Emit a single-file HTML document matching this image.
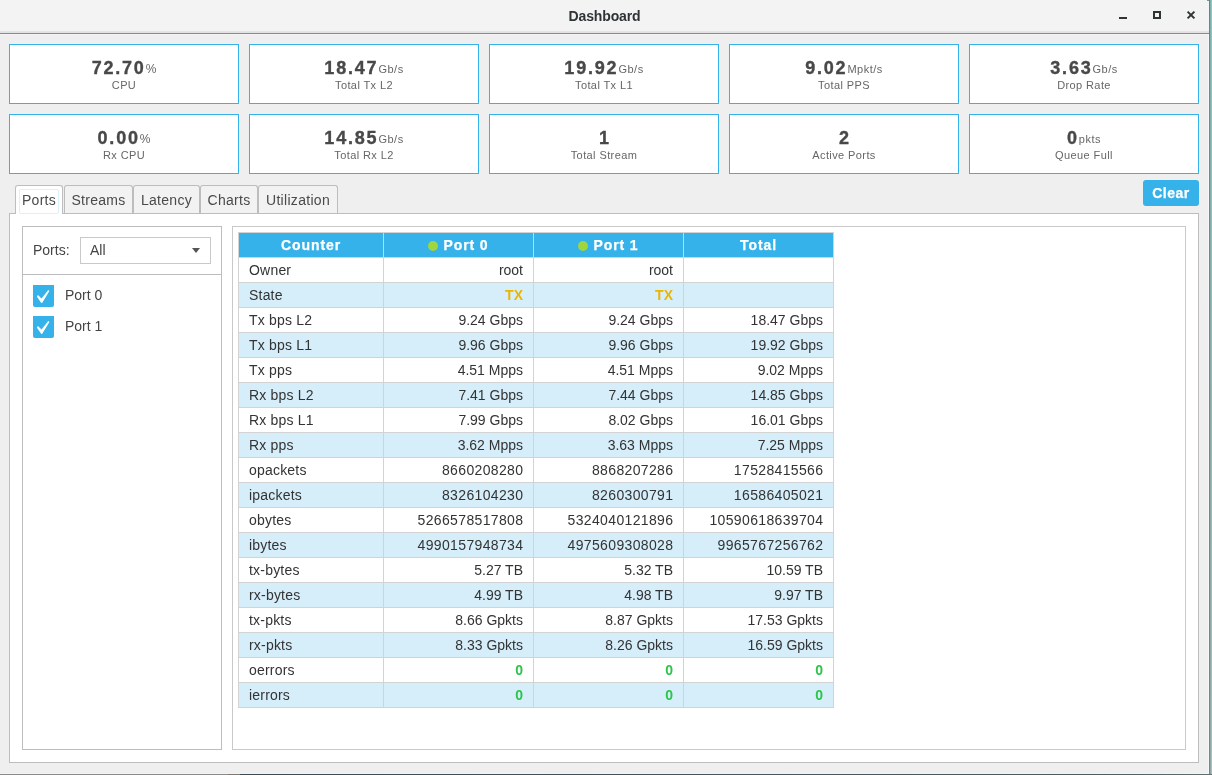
<!DOCTYPE html>
<html><head><meta charset="utf-8"><style>
*{margin:0;padding:0;box-sizing:border-box}
html,body{width:1212px;height:775px;overflow:hidden}
body{background:#efefef;font-family:"Liberation Sans",sans-serif;position:relative}
#win{will-change:transform;position:absolute;left:0;top:0;width:1209px;height:774px;background:#efefef;border-right:1px solid #f7f7f7;border-bottom:1px solid #f3f3f3}
#title{position:absolute;left:0;top:0;width:1209px;height:35px;background:linear-gradient(180deg,#f3f3f3 0,#f3f3f3 31px,#e4e4e4 31px,#e2e2e2 33px,#8b8b85 33px,#8b8b85 34px,#f5f5f5 34px)}
#title .t{position:absolute;left:0;width:1209px;top:8px;text-align:center;font-size:14px;font-weight:bold;color:#2e3436;line-height:16px;letter-spacing:-0.15px}
.wb{position:absolute}
.card{position:absolute;width:230px;height:60px;border:1px solid #35b2e9;background:#fff;text-align:center;color:#444}
.card .val{position:absolute;left:0;right:0;top:13px;line-height:20px;white-space:nowrap}
.card .n{font-size:18px;font-weight:bold;color:#484848;letter-spacing:1.8px;-webkit-text-stroke:0.35px #484848}
.card .u{font-size:11px;color:#666;margin-left:0;letter-spacing:0.5px;position:relative;top:-1px}
.card .u.pc{font-size:12px;letter-spacing:0}
.card .n.nu{margin-right:-1.8px}
.card .lbl{position:absolute;left:0;right:0;top:34px;font-size:11px;line-height:13px;color:#666;letter-spacing:0.4px}
#clear{position:absolute;left:1143px;top:180px;width:56px;height:26px;border-radius:3px;background:#35b2e9;color:#fff;font-weight:bold;font-size:14px;line-height:26px;text-align:center;letter-spacing:0.5px;-webkit-text-stroke:0.25px #fff}
.tab{position:absolute;top:185px;height:29px;border:1px solid #bdbdbd;border-bottom:none;border-radius:3px 3px 0 0;background:#f2f2f2;font-size:14px;color:#4a4a4a;text-align:center;line-height:29px;letter-spacing:0.3px}
.tab.act{background:#fff;height:29px;z-index:3}
.tab.act span{display:block;position:absolute;left:3px;right:3px;top:3px;height:25px;border:1px solid #dcf0fa;border-radius:2px;line-height:20px}
#pane{position:absolute;left:9px;top:213px;width:1190px;height:550px;background:#fff;border:1px solid #bdbdbd;z-index:2}
#lp{position:absolute;left:22px;top:226px;width:200px;height:524px;border:1px solid #bdbdbd;background:#fff;z-index:4}
#rp{position:absolute;left:232px;top:226px;width:954px;height:524px;border:1px solid #c9c9c9;background:#fff;z-index:4}
#lbl{position:absolute;left:33px;top:242px;font-size:14px;color:#444;z-index:5;line-height:16px}
#dd{position:absolute;left:80px;top:237px;width:131px;height:27px;border:1px solid #c9c9c9;background:#fff;z-index:5}
#dd span{position:absolute;left:9px;top:4px;font-size:14px;line-height:16px;color:#444}
#dd i{position:absolute;left:111px;top:10px;width:0;height:0;border-left:4.5px solid transparent;border-right:4.5px solid transparent;border-top:5px solid #555}
#sep{position:absolute;left:23px;top:274px;width:198px;height:1px;background:#bdbdbd;z-index:5}
.cb{position:absolute;left:33px;width:21px;height:22px;background:#35b2e9;border-radius:0 0 2px 2px;z-index:5}
.cbl{position:absolute;left:65px;font-size:14px;line-height:16px;color:#444;z-index:5}
.th,.td{position:absolute;height:26px;border:1px solid #d3d3d3;font-size:14px;line-height:24px;z-index:6;white-space:nowrap}
.th{background:#35b2e9;color:#fff;font-weight:bold;text-align:center;letter-spacing:0.9px;font-size:14px;-webkit-text-stroke:0.25px #fff}
.td{background:#fff;color:#333;text-align:right;padding-right:10px}
.td.alt{background:#d6eefa}
.td.dg{letter-spacing:0.35px;padding-right:9.65px}
.td.l{text-align:left;padding-left:10px;letter-spacing:0.2px}
.dot{display:inline-block;width:10px;height:10px;border-radius:50%;background:#9fd63d;margin-right:5px;vertical-align:-1px}
b.tx{color:#ebb500}
b.ok{color:#2cc44a}
#desk{position:absolute;left:0;top:774px;height:1px;width:1212px;background:linear-gradient(90deg,#8a8a8a 0,#8a8a8a 228px,#7d7872 228px,#7d7872 240px,#3c4a55 240px,#4d5c60 1100px,#5f7070 1212px)}
</style></head><body>
<div id="win">
<div id="title"><div class="t">Dashboard</div>
<svg class="wb" style="left:1116px;top:12px" width="14" height="14"><rect x="3" y="5" width="8" height="2" fill="#2e3436"/></svg>
<svg class="wb" style="left:1152px;top:10px" width="14" height="14"><rect x="2" y="2" width="6" height="6" fill="none" stroke="#2e3436" stroke-width="2"/></svg>
<svg class="wb" style="left:1185px;top:9px" width="14" height="14"><path d="M2.6 2.6L9.4 9.4M9.4 2.6L2.6 9.4" stroke="#2e3436" stroke-width="2"/></svg>
</div>
<div class="card" style="left:9px;top:44px"><div class="val"><span class="n">72.70</span><span class="u pc">%</span></div><div class="lbl">CPU</div></div>
<div class="card" style="left:249px;top:44px"><div class="val"><span class="n">18.47</span><span class="u">Gb/s</span></div><div class="lbl">Total Tx L2</div></div>
<div class="card" style="left:489px;top:44px"><div class="val"><span class="n">19.92</span><span class="u">Gb/s</span></div><div class="lbl">Total Tx L1</div></div>
<div class="card" style="left:729px;top:44px"><div class="val"><span class="n">9.02</span><span class="u">Mpkt/s</span></div><div class="lbl">Total PPS</div></div>
<div class="card" style="left:969px;top:44px"><div class="val"><span class="n">3.63</span><span class="u">Gb/s</span></div><div class="lbl">Drop Rate</div></div>
<div class="card" style="left:9px;top:114px"><div class="val"><span class="n">0.00</span><span class="u pc">%</span></div><div class="lbl">Rx CPU</div></div>
<div class="card" style="left:249px;top:114px"><div class="val"><span class="n">14.85</span><span class="u">Gb/s</span></div><div class="lbl">Total Rx L2</div></div>
<div class="card" style="left:489px;top:114px"><div class="val"><span class="n nu">1</span></div><div class="lbl">Total Stream</div></div>
<div class="card" style="left:729px;top:114px"><div class="val"><span class="n nu">2</span></div><div class="lbl">Active Ports</div></div>
<div class="card" style="left:969px;top:114px"><div class="val"><span class="n">0</span><span class="u">pkts</span></div><div class="lbl">Queue Full</div></div>
<div id="clear">Clear</div>
<div class="tab act" style="left:15px;width:48px"><span>Ports</span></div>
<div class="tab" style="left:64px;width:69px"><span>Streams</span></div>
<div class="tab" style="left:133px;width:67px"><span>Latency</span></div>
<div class="tab" style="left:200px;width:58px"><span>Charts</span></div>
<div class="tab" style="left:258px;width:80px"><span>Utilization</span></div>
<div id="pane"></div>
<div id="lp"></div>
<div id="rp"></div>
<div id="lbl">Ports:</div>
<div id="dd"><span>All</span><i></i></div>
<div id="sep"></div>
<div class="cb" style="top:285px"><svg width="21" height="22"><path d="M3.8 11.4L5.0 9.9L8.5 13.4L15.3 4.9L16.4 5.9L9.1 18.0L8.3 18.0Z" fill="#fff"/></svg></div>
<div class="cbl" style="top:287px">Port 0</div>
<div class="cb" style="top:316px"><svg width="21" height="22"><path d="M3.8 11.4L5.0 9.9L8.5 13.4L15.3 4.9L16.4 5.9L9.1 18.0L8.3 18.0Z" fill="#fff"/></svg></div>
<div class="cbl" style="top:318px">Port 1</div>
<div class="th" style="left:238px;top:232px;width:146px">Counter</div>
<div class="th" style="left:383px;top:232px;width:151px"><i class="dot"></i>Port 0</div>
<div class="th" style="left:533px;top:232px;width:151px"><i class="dot"></i>Port 1</div>
<div class="th" style="left:683px;top:232px;width:151px">Total</div>
<div class="td l" style="left:238px;top:257px;width:146px">Owner</div>
<div class="td" style="left:383px;top:257px;width:151px">root</div>
<div class="td" style="left:533px;top:257px;width:151px">root</div>
<div class="td" style="left:683px;top:257px;width:151px"></div>
<div class="td alt l" style="left:238px;top:282px;width:146px">State</div>
<div class="td alt" style="left:383px;top:282px;width:151px"><b class="tx">TX</b></div>
<div class="td alt" style="left:533px;top:282px;width:151px"><b class="tx">TX</b></div>
<div class="td alt" style="left:683px;top:282px;width:151px"></div>
<div class="td l" style="left:238px;top:307px;width:146px">Tx bps L2</div>
<div class="td" style="left:383px;top:307px;width:151px">9.24 Gbps</div>
<div class="td" style="left:533px;top:307px;width:151px">9.24 Gbps</div>
<div class="td" style="left:683px;top:307px;width:151px">18.47 Gbps</div>
<div class="td alt l" style="left:238px;top:332px;width:146px">Tx bps L1</div>
<div class="td alt" style="left:383px;top:332px;width:151px">9.96 Gbps</div>
<div class="td alt" style="left:533px;top:332px;width:151px">9.96 Gbps</div>
<div class="td alt" style="left:683px;top:332px;width:151px">19.92 Gbps</div>
<div class="td l" style="left:238px;top:357px;width:146px">Tx pps</div>
<div class="td" style="left:383px;top:357px;width:151px">4.51 Mpps</div>
<div class="td" style="left:533px;top:357px;width:151px">4.51 Mpps</div>
<div class="td" style="left:683px;top:357px;width:151px">9.02 Mpps</div>
<div class="td alt l" style="left:238px;top:382px;width:146px">Rx bps L2</div>
<div class="td alt" style="left:383px;top:382px;width:151px">7.41 Gbps</div>
<div class="td alt" style="left:533px;top:382px;width:151px">7.44 Gbps</div>
<div class="td alt" style="left:683px;top:382px;width:151px">14.85 Gbps</div>
<div class="td l" style="left:238px;top:407px;width:146px">Rx bps L1</div>
<div class="td" style="left:383px;top:407px;width:151px">7.99 Gbps</div>
<div class="td" style="left:533px;top:407px;width:151px">8.02 Gbps</div>
<div class="td" style="left:683px;top:407px;width:151px">16.01 Gbps</div>
<div class="td alt l" style="left:238px;top:432px;width:146px">Rx pps</div>
<div class="td alt" style="left:383px;top:432px;width:151px">3.62 Mpps</div>
<div class="td alt" style="left:533px;top:432px;width:151px">3.63 Mpps</div>
<div class="td alt" style="left:683px;top:432px;width:151px">7.25 Mpps</div>
<div class="td l" style="left:238px;top:457px;width:146px">opackets</div>
<div class="td dg" style="left:383px;top:457px;width:151px">8660208280</div>
<div class="td dg" style="left:533px;top:457px;width:151px">8868207286</div>
<div class="td dg" style="left:683px;top:457px;width:151px">17528415566</div>
<div class="td alt l" style="left:238px;top:482px;width:146px">ipackets</div>
<div class="td alt dg" style="left:383px;top:482px;width:151px">8326104230</div>
<div class="td alt dg" style="left:533px;top:482px;width:151px">8260300791</div>
<div class="td alt dg" style="left:683px;top:482px;width:151px">16586405021</div>
<div class="td l" style="left:238px;top:507px;width:146px">obytes</div>
<div class="td dg" style="left:383px;top:507px;width:151px">5266578517808</div>
<div class="td dg" style="left:533px;top:507px;width:151px">5324040121896</div>
<div class="td dg" style="left:683px;top:507px;width:151px">10590618639704</div>
<div class="td alt l" style="left:238px;top:532px;width:146px">ibytes</div>
<div class="td alt dg" style="left:383px;top:532px;width:151px">4990157948734</div>
<div class="td alt dg" style="left:533px;top:532px;width:151px">4975609308028</div>
<div class="td alt dg" style="left:683px;top:532px;width:151px">9965767256762</div>
<div class="td l" style="left:238px;top:557px;width:146px">tx-bytes</div>
<div class="td" style="left:383px;top:557px;width:151px">5.27 TB</div>
<div class="td" style="left:533px;top:557px;width:151px">5.32 TB</div>
<div class="td" style="left:683px;top:557px;width:151px">10.59 TB</div>
<div class="td alt l" style="left:238px;top:582px;width:146px">rx-bytes</div>
<div class="td alt" style="left:383px;top:582px;width:151px">4.99 TB</div>
<div class="td alt" style="left:533px;top:582px;width:151px">4.98 TB</div>
<div class="td alt" style="left:683px;top:582px;width:151px">9.97 TB</div>
<div class="td l" style="left:238px;top:607px;width:146px">tx-pkts</div>
<div class="td" style="left:383px;top:607px;width:151px">8.66 Gpkts</div>
<div class="td" style="left:533px;top:607px;width:151px">8.87 Gpkts</div>
<div class="td" style="left:683px;top:607px;width:151px">17.53 Gpkts</div>
<div class="td alt l" style="left:238px;top:632px;width:146px">rx-pkts</div>
<div class="td alt" style="left:383px;top:632px;width:151px">8.33 Gpkts</div>
<div class="td alt" style="left:533px;top:632px;width:151px">8.26 Gpkts</div>
<div class="td alt" style="left:683px;top:632px;width:151px">16.59 Gpkts</div>
<div class="td l" style="left:238px;top:657px;width:146px">oerrors</div>
<div class="td" style="left:383px;top:657px;width:151px"><b class="ok">0</b></div>
<div class="td" style="left:533px;top:657px;width:151px"><b class="ok">0</b></div>
<div class="td" style="left:683px;top:657px;width:151px"><b class="ok">0</b></div>
<div class="td alt l" style="left:238px;top:682px;width:146px">ierrors</div>
<div class="td alt" style="left:383px;top:682px;width:151px"><b class="ok">0</b></div>
<div class="td alt" style="left:533px;top:682px;width:151px"><b class="ok">0</b></div>
<div class="td alt" style="left:683px;top:682px;width:151px"><b class="ok">0</b></div>
</div>
<div id="desk"></div>
<div style="position:absolute;left:1207px;top:0;width:2px;height:1px;background:#6f9a9a"></div>
<div style="position:absolute;left:1209px;top:0;width:1px;height:774px;background:linear-gradient(180deg,#5f8585,#6f8c8a 60px,#728884 400px,#738989)"></div>
<div style="position:absolute;left:1210px;top:0;width:1px;height:774px;background:linear-gradient(180deg,#80b0b0,#88a8a5 400px,#90a8a8)"></div>
<div style="position:absolute;left:1211px;top:0;width:1px;height:774px;background:linear-gradient(180deg,#93c4c4,#9cb6b6 400px,#aac0c0)"></div>
</body></html>
